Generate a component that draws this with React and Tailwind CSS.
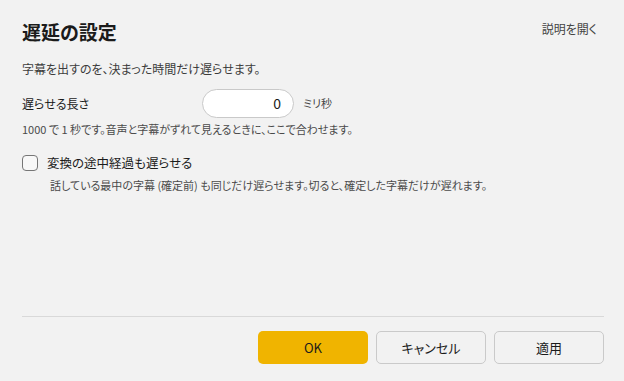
export default function App() {
  return (
    <div className="w-[624px] h-[381px] bg-[#f2f2f2] flex flex-col pl-[22px] pr-[20px] pt-[20px] pb-[17px] font-['Noto_Sans_CJK_JP',sans-serif] [font-feature-settings:'palt'] text-[#1b1b1b]">
      <div className="flex justify-between items-start">
        <h1 className="text-[19px] leading-[24px] font-bold">遅延の設定</h1>
        <button className="text-[12px] leading-[16px] mt-[1px] mr-[7px] text-[#444]">説明を開く</button>
      </div>
      <p className="mt-[17px] text-[12px] leading-[16px] text-[#3c3c3c]">字幕を出すのを、決まった時間だけ遅らせます。</p>
      <div className="mt-[12px] flex items-center">
        <label className="w-[180px] text-[12px] leading-[18px]">遅らせる長さ</label>
        <div className="w-[92px] h-[29px] rounded-full border border-[#c9c9c9] bg-white flex items-center justify-end pr-[12px] text-[14px]">0</div>
        <span className="ml-[9px] text-[11px] text-[#444]">ミリ秒</span>
      </div>
      <p className="mt-[3px] text-[11px] leading-[16px] text-[#4a4a4a]">1000 で 1 秒です。音声と字幕がずれて見えるときに、ここで合わせます。</p>
      <div className="mt-[16px] flex items-center h-[20px]">
        <div className="w-[16px] h-[16px] rounded-[4px] border-[1.5px] border-[#767676] bg-[#f8f8f8]"></div>
        <span className="ml-[9px] text-[12.5px] leading-[20px]">変換の途中経過も遅らせる</span>
      </div>
      <p className="mt-[4px] pl-[28px] text-[11px] leading-[16px] text-[#4a4a4a]">話している最中の字幕 (確定前) も同じだけ遅らせます。切ると、確定した字幕だけが遅れます。</p>
      <div className="flex-1"></div>
      <div className="h-px bg-[#d9d9d9]"></div>
      <div className="mt-[14px] flex justify-end gap-[8px]">
        <button className="w-[110px] h-[33px] rounded-[5px] bg-[#f0b400] text-[13px]">OK</button>
        <button className="w-[110px] h-[33px] rounded-[5px] bg-[#f2f2f2] border border-[#cacaca] text-[13px]">キャンセル</button>
        <button className="w-[110px] h-[33px] rounded-[5px] bg-[#f2f2f2] border border-[#cacaca] text-[13px]">適用</button>
      </div>
    </div>
  );
}
